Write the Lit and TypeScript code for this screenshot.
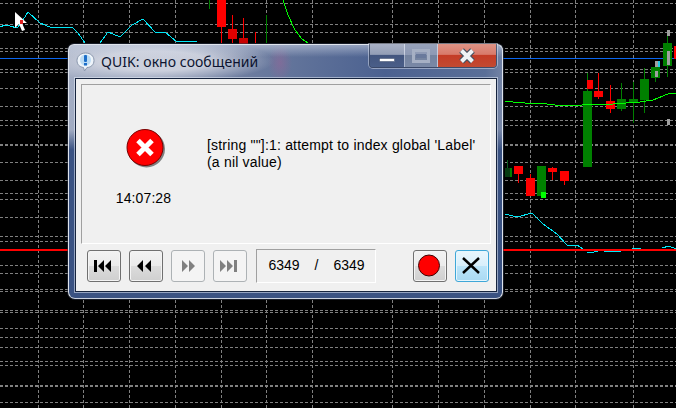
import { LitElement, html, css, svg } from "lit";
import { customElement } from "lit/decorators.js";

const VX = [38, 83, 129, 175, 221, 266, 312, 392, 438, 484, 530, 575, 633];
const HY = [3, 24, 32, 48, 51, 69, 72, 88, 106, 120, 125, 162, 180, 193, 199, 217, 236, 241, 265, 273, 289, 291, 310, 312, 328, 337, 347, 361, 365, 402];
const HTHICK = [144, 385];

// [x, y, w, h, colour]
const BODIES: [number, number, number, number, string][] = [
  [217, 0, 9, 27, "#ff0000"], [228, 29, 9, 10, "#e00000"], [239, 38, 9, 6, "#c80000"],
  [505, 168, 7, 9, "#063a10"], [510, 168, 2, 9, "#008000"],
  [514, 166, 9, 8, "#ff0000"], [526, 178, 9, 18, "#ff0000"], [537, 166, 9, 30, "#008000"],
  [541, 192, 5, 6, "#00ff00"], [548, 168, 9, 4, "#ff0000"], [560, 171, 9, 10, "#ff0000"],
  [583, 91, 9, 76, "#008000"], [587, 80, 6, 9, "#ff0000"], [594, 91, 9, 6, "#ff0000"],
  [606, 101, 9, 8, "#ff0000"], [617, 99, 9, 10, "#008000"], [629, 99, 9, 3, "#008000"],
  [640, 79, 9, 21, "#008000"], [651, 67, 9, 11, "#008000"], [655, 61, 3, 6, "#a0a0a0"],
  [658, 61, 2, 6, "#22c8e8"], [655, 71, 3, 6, "#a0a0a0"], [663, 43, 9, 23, "#008000"],
  [667, 51, 3, 14, "#a0a0a0"], [667, 30, 3, 6, "#a0a0a0"], [667, 119, 3, 6, "#a0a0a0"],
  [674, 46, 2, 13, "#ff0000"],
];
// [x, y1, y2, colour]
const WICKS: [number, number, number, string][] = [
  [209, 0, 9, "#008000"], [221, 27, 43, "#ff0000"], [232, 15, 43, "#ff0000"], [243, 18, 43, "#ff0000"],
  [255, 32, 43, "#ff0000"], [266, 15, 43, "#008000"], [507, 160, 177, "#0a5a1e"], [518, 174, 183, "#ff0000"],
  [530, 174, 178, "#ff0000"], [552, 167, 180, "#ff0000"], [564, 181, 185, "#ff0000"],
  [587, 73, 91, "#008000"], [598, 73, 99, "#ff0000"], [610, 85, 113, "#ff0000"], [621, 83, 111, "#008000"],
  [633, 82, 123, "#008000"], [644, 68, 113, "#008000"], [655, 78, 82, "#008000"], [667, 30, 77, "#008000"],
];
const CYAN = [
  "0,27 5,25 10,26 17,28 21,23 28,12 40,23 52,28 60,27 73,28 78,33 85,43",
  "100,43 108,32 120,37 132,25 143,19 155,32 165,32 177,42 187,41 197,42",
  "505,214 517,217 532,213 543,224 557,234 567,245 577,245 583,249",
  "587,252 590,253 598,251", "604,251 612,252 621,251", "632,248 641,248", "662,248 669,246 676,249",
];
const GREEN = [
  "283,0 288,15 295,30 302,39 308,43",
  "505,101 513,102 525,103 547,104 563,106 582,105 613,104 640,102 653,100 663,96 670,93 676,93",
];

@customElement("app-root")
export class AppRoot extends LitElement {
  static styles = css`
    :host { display: block; position: relative; width: 676px; height: 408px; background: #000; overflow: hidden; }
    .chart { position: absolute; inset: 0; }
    .window {
      position: absolute; left: 68px; top: 44px; width: 435px; height: 255px; box-sizing: border-box;
      display: flex; flex-direction: column; padding: 0 5px 6px 6px;
      border-radius: 6px 6px 7px 7px;
      border: 1px solid #dfe4ec; border-bottom-color: #c9d1de;
      background:
        linear-gradient(180deg, rgba(215,222,235,.5) 0, rgba(215,222,235,0) 12px),
        radial-gradient(ellipse 12px 20px at 211px 18px, rgba(165,95,150,.4), rgba(165,95,150,0)),
        radial-gradient(ellipse 120px 22px at 85px 16px, rgba(215,218,228,.85) 45%, rgba(215,218,228,0)),
        linear-gradient(180deg, rgba(60,85,130,0) 85px, #3a5282 105px),
        linear-gradient(95deg, #a4aec4 0, #6c7c9f 40%, #4b6190 70%, #5a6f98 92%, #8f9ab4 100%);
      box-shadow: 0 0 0 1px rgba(40,50,70,.55);
    }
    .title { display: flex; align-items: center; height: 33px; flex: none; position: relative; gap: 6px; margin-left: 1px; }
    .title svg { flex: none; }
    .title span { font: 14px "Noto Sans", sans-serif; letter-spacing: .05px; color: #0c1430; white-space: nowrap; }
    .caption {
      position: absolute; right: 0; top: -1px; height: 24px; display: flex; box-sizing: border-box;
      border: 1px solid rgba(50,62,88,.7); border-top: none; border-radius: 0 0 4px 4px; box-shadow: 0 0 0 1px rgba(235,240,250,.45);
      overflow: hidden;
    }
    .cb { display: flex; align-items: center; justify-content: center; width: 35px; box-sizing: border-box; border-right: 1px solid rgba(235,240,250,.6); background: linear-gradient(180deg, #aab2c6 0, #939eb6 45%, #43567f 50%, #4a5e88 100%); }
    .cb.min { align-items: flex-end; padding-bottom: 5px; }
    .cb.max { width: 33px; background: linear-gradient(180deg, #97a2ba 0, #8d99b4 48%, #74839f 50%, #7a89a6 100%); }
    .cb.close { width: 58px; border-right: none; background: linear-gradient(180deg, #de9486 0, #d87a6a 45%, #c43c26 50%, #c24a32 100%); }
    .client {
      flex: 1; min-height: 0; display: flex; flex-direction: column; box-sizing: border-box;
      background: #f0f0f0; border: 1px solid #16243e; box-shadow: 0 0 0 1px rgba(240,245,255,.5);
      padding: 5px 5px 8px 5px;
    }
    .panel {
      flex: 1; min-height: 0; display: flex; box-sizing: border-box;
      border: 1px solid; border-color: #a0a0a0 #fff #fff #a0a0a0;
    }
    .left { width: 126px; flex: none; display: flex; flex-direction: column; align-items: center; padding-top: 44px; box-sizing: border-box; }
    .time { font: 14px "Liberation Sans", sans-serif; letter-spacing: .1px; color: #000; margin: 19px 3px 0 0; }
    .msg { font: 14px/17px "Liberation Sans", sans-serif; letter-spacing: .19px; color: #000; padding-top: 52px; margin-left: -1px; }
    .bar { display: flex; align-items: center; gap: 8px; padding: 5px 0 0 6px; flex: none; }
    .btn {
      width: 34px; height: 32px; box-sizing: border-box; border: 1px solid #707070; border-radius: 3px;
      display: flex; align-items: center; justify-content: center; box-shadow: inset 0 0 0 1px #f4f4f4;
      background: linear-gradient(180deg, #f2f2f2 0, #ebebeb 50%, #dcdcdc 50%, #cfcfcf 100%);
    }
    .btn.off { border-color: #adb2b5; background: #f4f4f4; box-shadow: none; }
    .btn.focus { border-color: #3fa7d8; box-shadow: inset 0 0 0 1px #e6f6fd; background: linear-gradient(180deg, #e9f6fd 0, #d8effb 50%, #bce5fa 50%, #a9d9f2 100%); }
    .counter {
      width: 120px; height: 34px; box-sizing: border-box; margin-left: 1px; padding-left: 1px; display: flex; align-items: center;
      justify-content: center; gap: 15px; border: 1px solid; border-color: #a0a0a0 #fff #fff #a0a0a0;
      font: 14px "Liberation Sans", sans-serif; color: #000; padding-bottom: 2px;
    }
    .rec { margin-left: 29px; }
  `;

  private chart() {
    return html`<svg class="chart" width="676" height="408" viewBox="0 0 676 408">
      <g shape-rendering="crispEdges" fill="none">
        ${HY.map((y) => svg`<line x1="0" x2="676" y1=${y + 0.5} y2=${y + 0.5} stroke="#808080" stroke-dasharray="3 2"/>`)}
        ${HTHICK.map((y) => svg`<line x1="0" x2="676" y1=${y + 1} y2=${y + 1} stroke="#808080" stroke-width="2" stroke-dasharray="3 2"/>`)}
        ${VX.map((x) => svg`<line y1="0" y2="408" x1=${x + 0.5} x2=${x + 0.5} stroke="#808080" stroke-dasharray="3 2"/>`)}
        <rect x="0" y="58" width="676" height="1" fill="#0a66f0"/>
        <rect x="0" y="249" width="676" height="2" fill="#ff0000"/>
        ${WICKS.map(([x, a, b, c]) => svg`<rect x=${x} y=${a} width="1" height=${b - a} fill=${c}/>`)}
        ${BODIES.map(([x, y, w, h, c]) => svg`<rect x=${x} y=${y} width=${w} height=${h} fill=${c}/>`)}
      </g>
      <g fill="none" stroke-width="1" shape-rendering="crispEdges">
        ${CYAN.map((p) => svg`<polyline points=${p} stroke="#00e8f8"/>`)}
        ${GREEN.map((p) => svg`<polyline points=${p} stroke="#00ff00"/>`)}
      </g>
      <path d="M15 12 L15 28 L19 24 L22 31 L25 30 L22 23 L27 23 Z" fill="#fff"/>
      <rect x="20" y="20" width="3" height="4" fill="#e02020"/>
    </svg>`;
  }

  private tri(kind: string, c: string) {
    const parts: Record<string, string> = {
      first: "M0 0h3v12h-3z M10 0v12l-6-6z M17 0v12l-6-6z",
      prev: "M7 0v12l-6-6z M15 0v12l-6-6z",
      next: "M4 0v12l6-6z M11 0v12l6-6z",
      last: "M0 0v12l6-6z M7 0v12l6-6z M14 0h3v12h-3z",
    };
    return html`<svg width="20" height="12" viewBox="0 0 20 12"><path d=${parts[kind]} fill=${c}/></svg>`;
  }

  render() {
    return html`
      ${this.chart()}
      <div class="window">
        <div class="title">
          <svg width="19" height="20" viewBox="0 0 19 20">
            <path d="M9.5 1C14.5 1 18 4 18 8.5S14.5 15.500 11 15.500L8.500 19 7.500 15.500C3.500 15 1 12.500 1 8.500S4.500 1 9.500 1Z" fill="#eef4fa" stroke="#8a97ad"/>
            <circle cx="9.500" cy="8" r="5.500" fill="#bcdcf4"/>
            <rect x="8" y="3" width="3" height="7" rx="1" fill="#1c6ec8"/>
            <rect x="8" y="11" width="3" height="2.500" fill="#1c6ec8"/>
          </svg>
          <span>QUIK: окно сообщений</span>
          <div class="caption">
            <div class="cb min"><svg width="16" height="4" viewBox="0 0 16 4"><rect x="0.500" y="0.500" width="15" height="3" fill="#fff" stroke="#3a4a68" stroke-width=".5"/></svg></div>
            <div class="cb max"><svg width="18" height="14" viewBox="0 0 18 14"><rect x="1.500" y="1.500" width="15" height="11" fill="none" stroke="#a6b0c4" stroke-width="3"/><rect x="4" y="5" width="10" height="4" fill="#6a7a9c"/></svg></div>
            <div class="cb close"><svg width="18" height="16" viewBox="0 0 18 16"><path d="M3.500 2.500 L14.500 13.500 M14.500 2.500 L3.500 13.500" stroke="#46505e" stroke-width="6.500"/><path d="M3.500 2.500 L14.500 13.500 M14.500 2.500 L3.500 13.500" stroke="#f0f2f4" stroke-width="4"/></svg></div>
          </div>
        </div>
        <div class="client">
          <div class="panel">
            <div class="left">
              <svg width="42" height="42" viewBox="0 0 42 42">
                <circle cx="22.500" cy="20" r="18.500" fill="#808080"/>
                <circle cx="21" cy="18.500" r="18" fill="#ff0000" stroke="#780000"/>
                <path d="M14 11.500 L28 25.500 M28 11.500 L14 25.500" stroke="#fff" stroke-width="5"/>
              </svg>
              <div class="time">14:07:28</div>
            </div>
            <div class="msg">[string ""]:1: attempt to index global 'Label'<br />(a nil value)</div>
          </div>
          <div class="bar">
            <div class="btn">${this.tri("first", "#000")}</div>
            <div class="btn">${this.tri("prev", "#000")}</div>
            <div class="btn off">${this.tri("next", "#808080")}</div>
            <div class="btn off">${this.tri("last", "#808080")}</div>
            <div class="counter"><span>6349</span><span>/</span><span>6349</span></div>
            <div class="btn rec"><svg width="24" height="24" viewBox="0 0 24 24"><circle cx="11" cy="11.500" r="10.500" fill="#ff0000" stroke="#400000"/></svg></div>
            <div class="btn focus"><svg width="20" height="18" viewBox="0 0 20 18"><path d="M1 1 L17 16 M17 1 L1 16" stroke="#000" stroke-width="2.400"/></svg></div>
          </div>
        </div>
      </div>
    `;
  }
}
